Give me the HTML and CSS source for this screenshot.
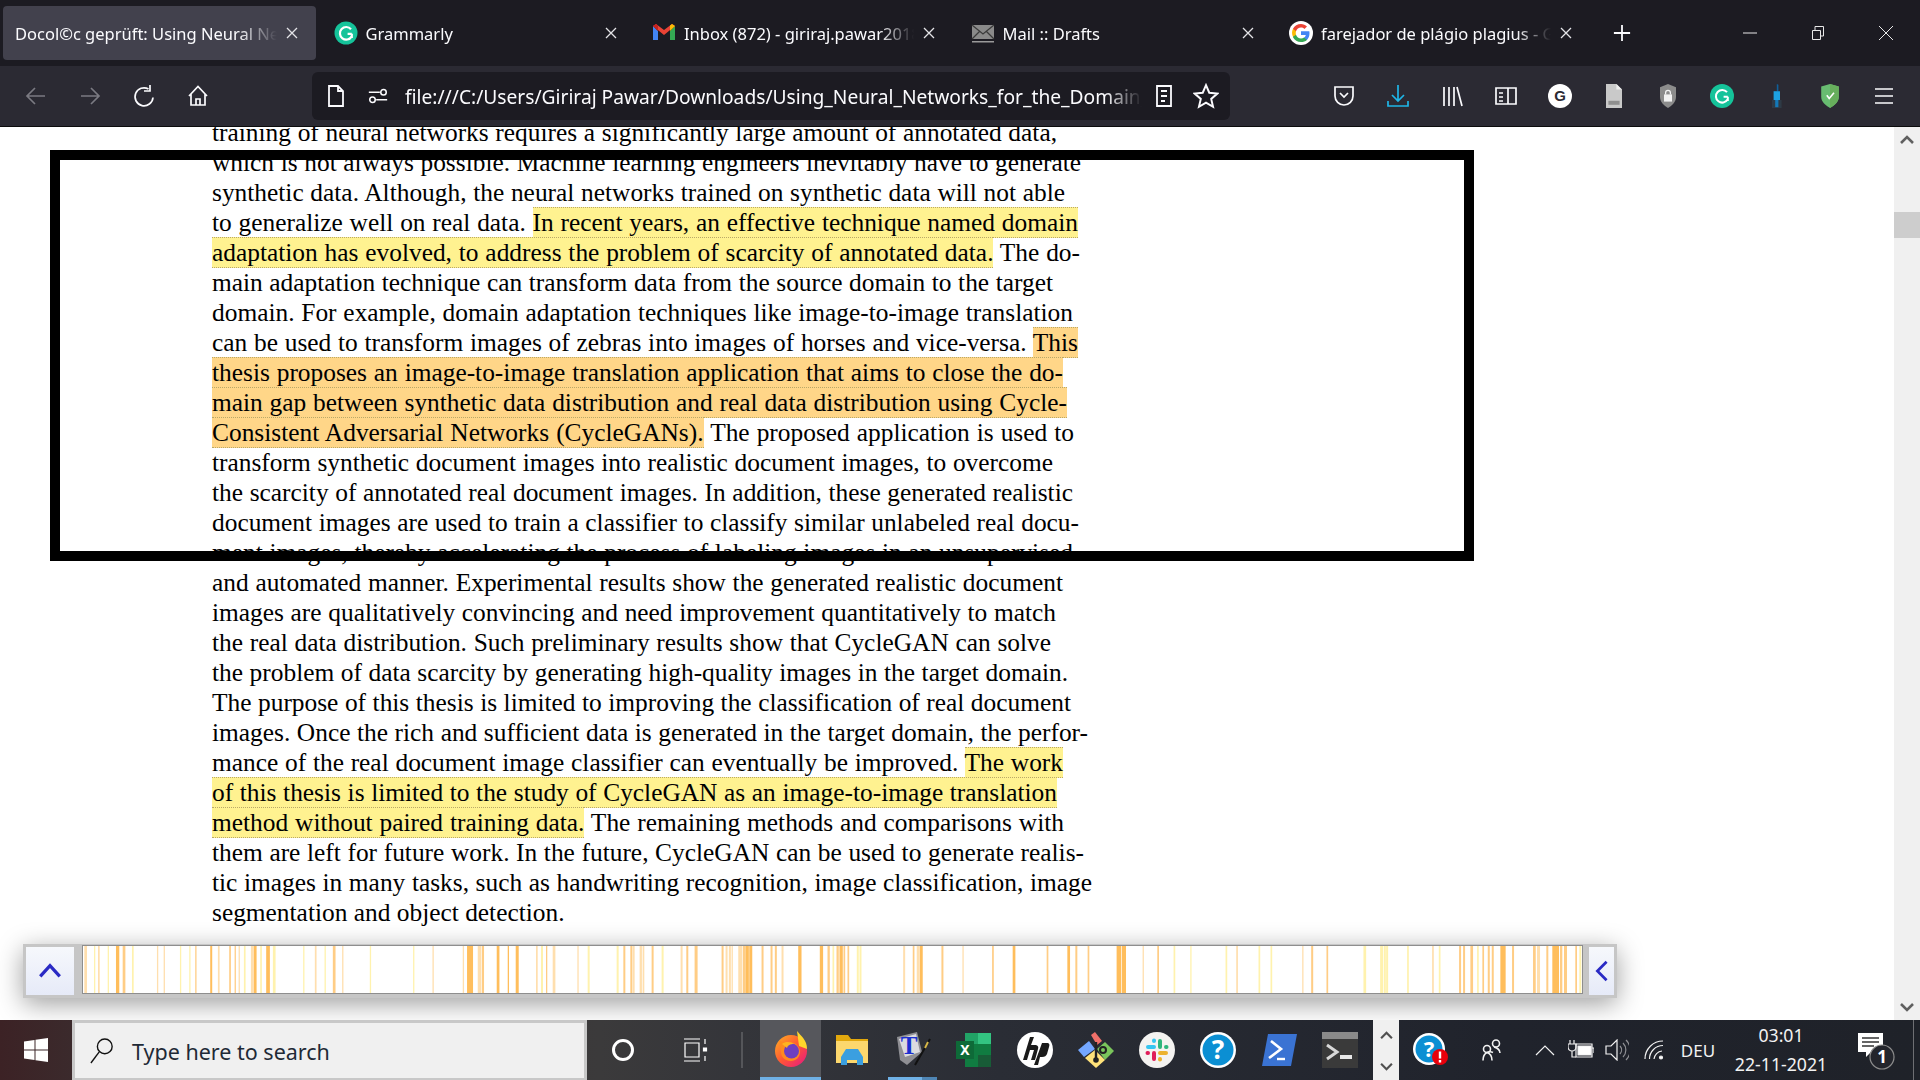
FILE: index.html
```html
<!DOCTYPE html>
<html>
<head>
    <title>Docol©c geprüft: Using Neural Networks</title>
    <link rel="stylesheet" href="styles.css">
</head>
<body>
    <!-- Browser tabs -->
    <div class="tabbar">
        <div class="tab active">
            <span class="tab-title first">Docol©c geprüft: Using Neural Networks</span>
            <svg class="close" viewBox="0 0 14 14"><path d="M2 2l10 10M12 2L2 12"/></svg>
        </div>
        <div class="tab">
            <svg class="favicon" viewBox="0 0 24 24"><circle cx="12" cy="12" r="11.5" fill="#15c39a"/><path d="M17 8.2A6.3 6.3 0 1 0 17.6 15.6M17.8 12.8V17M13.6 12.8h4.2" fill="none" stroke="#fff" stroke-width="2.2"/></svg>
            <span class="tab-title">Grammarly</span>
            <svg class="close" viewBox="0 0 14 14"><path d="M2 2l10 10M12 2L2 12"/></svg>
        </div>
        <div class="tab">
            <svg class="favicon" viewBox="0 0 24 24"><path d="M1 5v14h5V10z" fill="#4285f4"/><path d="M18 10v9h5V5z" fill="#34a853"/><path d="M1 5l11 9 11-9-3-2-8 6-8-6z" fill="#ea4335"/><path d="M18 10l5-5-3-2-2 1.500z" fill="#fbbc04"/><path d="M1 5l3-2 2 1.500V10z" fill="#c5221f"/></svg>
            <span class="tab-title">Inbox (872) - giriraj.pawar2018@gmail.com</span>
            <svg class="close" viewBox="0 0 14 14"><path d="M2 2l10 10M12 2L2 12"/></svg>
        </div>
        <div class="tab">
            <svg class="favicon" viewBox="0 0 24 24"><path d="M1 4h22v14H1z" fill="#8a8a8a"/><path d="M1 4l11 9 11-9M1 18l8-8M23 18l-8-8" fill="none" stroke="#3a3a3a" stroke-width="1.200"/><path d="M1 20h22v1.500H1z" fill="#9a9a9a"/></svg>
            <span class="tab-title">Mail :: Drafts</span>
            <svg class="close" viewBox="0 0 14 14"><path d="M2 2l10 10M12 2L2 12"/></svg>
        </div>
        <div class="tab">
            <svg class="favicon" viewBox="0 0 24 24"><circle cx="12" cy="12" r="12" fill="#fff"/><path d="M20.500 12.200c0-.7-.1-1.300-.2-1.900H12v3.600h4.800c-.2 1.100-.8 2.100-1.800 2.700v2.300h2.900c1.700-1.600 2.600-3.900 2.600-6.700z" fill="#4285f4"/><path d="M12 21c2.400 0 4.400-.8 5.900-2.100L15 16.600c-.8.500-1.800.9-3 .9-2.300 0-4.300-1.600-5-3.700H4v2.400C5.500 19.100 8.500 21 12 21z" fill="#34a853"/><path d="M7 13.800c-.4-1.100-.4-2.400 0-3.600V7.800H4c-1.300 2.500-1.300 5.500 0 8z" fill="#fbbc04"/><path d="M12 6.600c1.300 0 2.500.5 3.400 1.300L18 5.400C16.400 3.900 14.300 3 12 3 8.500 3 5.500 4.900 4 7.800l3 2.400c.7-2.100 2.700-3.600 5-3.600z" fill="#ea4335"/></svg>
            <span class="tab-title">farejador de plágio plagius - Google Search</span>
            <svg class="close" viewBox="0 0 14 14"><path d="M2 2l10 10M12 2L2 12"/></svg>
        </div>
        <svg class="newtab" viewBox="0 0 20 20"><path d="M10 1v18M1 10h18"/></svg>
        <div class="winctl">
            <div class="winbtn"><svg viewBox="0 0 16 16"><path d="M1 8h14"/></svg></div>
            <div class="winbtn"><svg viewBox="0 0 16 16"><path d="M2.500 5.500h8v9h-8zM5 5.500v-4h8.500v9.500h-3"/></svg></div>
            <div class="winbtn"><svg viewBox="0 0 16 16"><path d="M1 1l14 14M15 1L1 15"/></svg></div>
        </div>
    </div>

    <!-- Navigation toolbar -->
    <div class="toolbar">
        <div class="tool dim"><svg viewBox="0 0 24 24"><path d="M21 12H3M11 4l-8 8 8 8"/></svg></div>
        <div class="tool dim"><svg viewBox="0 0 24 24"><path d="M3 12h18M13 4l8 8-8 8"/></svg></div>
        <div class="tool"><svg viewBox="0 0 24 24"><path d="M21 13.500A9 9 0 1 1 16.500 5M18 1v6h-6"/></svg></div>
        <div class="tool"><svg viewBox="0 0 24 24"><path d="M3 12L12 2.500 21 12M5 10v11h14V10M10 21v-6h4v6"/></svg></div>
        <div class="urlbar">
            <svg class="url-icon page-icon" viewBox="0 0 20 24"><path d="M3 2h9l5 5v15H3zM12 2v5h5"/></svg>
            <svg class="url-icon perm-icon" viewBox="0 0 24 24"><circle cx="6" cy="16" r="3"/><circle cx="18" cy="8" r="3"/><path d="M2 8h12M10 16h12"/></svg>
            <span class="url">file:///C:/Users/Giriraj Pawar/Downloads/Using_Neural_Networks_for_the_Domain_Adaptation.pdf</span>
            <svg class="url-icon reader" viewBox="0 0 20 24"><path d="M3 2h14v20H3zM7 7h6M7 12h6M7 17h4"/></svg>
            <svg class="url-icon star" viewBox="0 0 24 24"><path d="M12 2l3 7 7.500.7-5.700 5 1.700 7.300-6.500-3.900L5.500 22l1.700-7.300-5.700-5L9 9z"/></svg>
        </div>
        <div class="tool"><svg viewBox="0 0 24 24"><path d="M3 3h18v9a9 9 0 0 1-18 0zM8 9l4 4 4-4"/></svg></div>
        <div class="tool blue"><svg viewBox="0 0 24 24"><path d="M12 1v16M6 11l6 6 6-6M2 17v5h20v-5"/></svg></div>
        <div class="tool"><svg viewBox="0 0 24 24"><path d="M4 3v19M9 3v19M14 3v19M17 3l5 19"/></svg></div>
        <div class="tool"><svg viewBox="0 0 24 24"><path d="M2 4h20v16H2zM14 4v16M5 9h4M5 13h4M5 17h4"/></svg></div>
        <div class="tool"><svg class="ext" viewBox="0 0 24 24"><circle cx="12" cy="12" r="12" fill="#fff"/><text x="12" y="17" class="ext-g">G</text></svg></div>
        <div class="tool"><svg class="ext" viewBox="0 0 24 30"><path d="M2 0h13l7 7v23H2z" fill="#c9c9c9"/><path d="M15 0l7 7h-7z" fill="#eee"/><path d="M5 21h14v5H5z" fill="#8f8f8f"/></svg></div>
        <div class="tool"><svg class="ext" viewBox="0 0 24 30"><path d="M12 0l10 4v12c0 7-5 11-10 14C7 27 2 23 2 16V4z" fill="#8c8c8c"/><path d="M7 13h10v9H7z" fill="#f2f2f2"/><path d="M9 13v-2a3 3 0 0 1 6 0v2" fill="none" stroke="#f2f2f2" stroke-width="1.600"/></svg></div>
        <div class="tool"><svg class="ext" viewBox="0 0 24 24"><circle cx="12" cy="12" r="12" fill="#15c39a"/><path d="M17 8.200A6.300 6.300 0 1 0 17.600 15.600M17.800 12.800V17M13.600 12.800h4.200" fill="none" stroke="#fff" stroke-width="2"/></svg></div>
        <div class="tool"><svg class="ext" viewBox="0 0 24 30"><path d="M13 0l2 1v8h-2z" fill="#0f5f9a"/><path d="M9 9h8v11H9z" fill="#1da1e2"/><path d="M7 20h12v10H7z" fill="#2e3a46"/><path d="M11 20h4v9h-4z" fill="#1478b8"/></svg></div>
        <div class="tool"><svg class="ext" viewBox="0 0 24 30"><path d="M12 0l11 3v13c0 7-6 11-11 14C7 27 1 23 1 16V3z" fill="#68bc71"/><path d="M12 0l11 3v13c0 7-6 11-11 14z" fill="#67ae5c"/><path d="M8 14l3 4 6-7" fill="none" stroke="#fff" stroke-width="2"/></svg></div>
        <div class="tool"><svg viewBox="0 0 24 24"><path d="M3 5h18M3 12h18M3 19h18"/></svg></div>
    </div>

    <!-- Page with the PDF text -->
    <div class="viewport">
        <div class="doc">
            <div class="lines">
                <div class="ln" style="width:845px">training of neural networks requires a significantly large amount of annotated data,</div>
                <div class="ln" style="width:869px">which is not always possible. Machine learning engineers inevitably have to generate</div>
                <div class="ln" style="width:853px">synthetic data. Although, the neural networks trained on synthetic data will not able</div>
                <div class="ln" style="width:866px">to generalize well on real data. <span class="hl yellow">In recent years, an effective technique named domain</span></div>
                <div class="ln" style="width:868px"><span class="hl yellow">adaptation has evolved, to address the problem of scarcity of annotated data.</span> The do-</div>
                <div class="ln" style="width:841px">main adaptation technique can transform data from the source domain to the target</div>
                <div class="ln" style="width:861px">domain. For example, domain adaptation techniques like image-to-image translation</div>
                <div class="ln" style="width:866px">can be used to transform images of zebras into images of horses and vice-versa. <span class="hl orange">This</span></div>
                <div class="ln" style="width:851px"><span class="hl orange">thesis proposes an image-to-image translation application that aims to close the do-</span></div>
                <div class="ln" style="width:855px"><span class="hl orange">main gap between synthetic data distribution and real data distribution using Cycle-</span></div>
                <div class="ln" style="width:862px"><span class="hl orange">Consistent Adversarial Networks (CycleGANs).</span> The proposed application is used to</div>
                <div class="ln" style="width:841px">transform synthetic document images into realistic document images, to overcome</div>
                <div class="ln" style="width:861px">the scarcity of annotated real document images. In addition, these generated realistic</div>
                <div class="ln" style="width:867px">document images are used to train a classifier to classify similar unlabeled real docu-</div>
                <div class="ln" style="width:861px">ment images, thereby accelerating the process of labeling images in an unsupervised</div>
                <div class="ln" style="width:851px">and automated manner. Experimental results show the generated realistic document</div>
                <div class="ln" style="width:844px">images are qualitatively convincing and need improvement quantitatively to match</div>
                <div class="ln" style="width:839px">the real data distribution. Such preliminary results show that CycleGAN can solve</div>
                <div class="ln" style="width:856px">the problem of data scarcity by generating high-quality images in the target domain.</div>
                <div class="ln" style="width:859px">The purpose of this thesis is limited to improving the classification of real document</div>
                <div class="ln" style="width:876px">images. Once the rich and sufficient data is generated in the target domain, the perfor-</div>
                <div class="ln" style="width:851px">mance of the real document image classifier can eventually be improved. <span class="hl yellow">The work</span></div>
                <div class="ln" style="width:845px"><span class="hl yellow">of this thesis is limited to the study of CycleGAN as an image-to-image translation</span></div>
                <div class="ln" style="width:852px"><span class="hl yellow">method without paired training data.</span> The remaining methods and comparisons with</div>
                <div class="ln" style="width:872px">them are left for future work. In the future, CycleGAN can be used to generate realis-</div>
                <div class="ln" style="width:880px">tic images in many tasks, such as handwriting recognition, image classification, image</div>
                <div class="ln last">segmentation and object detection.</div>
            </div>

            <!-- Black rectangle drawn over the page -->
            <div class="frame"></div>

            <!-- Annotation overview strip -->
            <div class="strip">
                <div class="strip-btn up"><svg viewBox="0 0 24 24"><path d="M3 17l9-10 9 10"/></svg></div>
                <div class="strip-bar">
                    <svg viewBox="82 0 1500 48" preserveAspectRatio="none">
                        <g class="mark-y">
                            <rect x="93" width="1.3"/><rect x="106.700" width="1.300"/><rect x="131" width="1.700"/><rect x="179" width="1.300"/><rect x="188.300" width="1.300"/><rect x="243" width="1.700"/><rect x="259.300" width="1.700"/><rect x="272" width="2.700"/><rect x="302.300" width="1.300"/><rect x="323.700" width="1.300"/><rect x="369" width="1.300"/><rect x="412.300" width="1.300"/><rect x="540.300" width="2"/><rect x="587" width="2"/><rect x="616" width="2"/><rect x="661" width="2"/><rect x="832" width="1.700"/><rect x="856.300" width="2"/><rect x="859" width="2"/><rect x="1173.300" width="1.700"/><rect x="1190" width="1.300"/><rect x="1225.300" width="1.700"/><rect x="1258.300" width="1.700"/><rect x="1270.300" width="1.700"/><rect x="1363.300" width="2.700"/><rect x="1380" width="3"/><rect x="1383.700" width="2"/><rect x="1386" width="2"/><rect x="1407" width="1.700"/><rect x="1438.700" width="1.700"/><rect x="1477" width="1.700"/><rect x="1579.300" width="2"/>
                        </g>
                        <g class="mark-p">
                            <rect x="83.300" width="2.700"/><rect x="97" width="1.700"/><rect x="156" width="1.300"/><rect x="162.700" width="1.300"/><rect x="217" width="1.700"/><rect x="237.700" width="1.300"/><rect x="250" width="2.300"/><rect x="314" width="1.700"/><rect x="341.300" width="1.300"/><rect x="431.700" width="1.300"/><rect x="462" width="1.300"/><rect x="477" width="3.300"/><rect x="535.300" width="1.700"/><rect x="552" width="2.700"/><rect x="576.700" width="1.300"/><rect x="631.700" width="2.300"/><rect x="639" width="2.300"/><rect x="642" width="1.700"/><rect x="680" width="2"/><rect x="725" width="2"/><rect x="728.300" width="2"/><rect x="731" width="1.300"/><rect x="737.700" width="4"/><rect x="781" width="2"/><rect x="902.700" width="2"/><rect x="916.300" width="2.700"/><rect x="962" width="1.300"/><rect x="1142.300" width="1.300"/><rect x="1236" width="1.700"/><rect x="1302" width="1.300"/><rect x="1432" width="1.700"/><rect x="1537" width="3"/>
                        </g>
                        <g class="mark-l">
                            <rect x="121.700" width="2.700"/><rect x="194.300" width="1.300"/><rect x="228.300" width="1.700"/><rect x="233.700" width="1.300"/><rect x="332" width="2.700"/><rect x="481" width="2.300"/><rect x="545.300" width="1.300"/><rect x="622.700" width="2"/><rect x="629.700" width="1.700"/><rect x="651" width="2"/><rect x="685.700" width="2"/><rect x="694" width="3"/><rect x="721" width="2"/><rect x="742.300" width="2.700"/><rect x="761" width="2"/><rect x="770" width="2"/><rect x="774.300" width="2"/><rect x="827" width="2.300"/><rect x="836" width="2.300"/><rect x="843" width="1.700"/><rect x="847" width="1.700"/><rect x="912.300" width="1.700"/><rect x="941" width="2"/><rect x="991.700" width="1.700"/><rect x="1046.300" width="1.700"/><rect x="1075" width="2"/><rect x="1087.300" width="1.700"/><rect x="1157" width="1.700"/><rect x="1311" width="2"/><rect x="1326.300" width="1.700"/><rect x="1459" width="2"/><rect x="1463" width="2"/><rect x="1470.300" width="2.700"/><rect x="1482.300" width="1.700"/><rect x="1487.700" width="2"/><rect x="1491.700" width="2"/><rect x="1512" width="2"/><rect x="1533" width="2.700"/><rect x="1546.300" width="2"/><rect x="1560" width="2.300"/><rect x="1564" width="3"/><rect x="1575.300" width="1.700"/>
                        </g>
                        <g class="mark-o">
                            <rect x="115" width="3.300"/><rect x="209.300" width="2"/><rect x="252.700" width="3"/><rect x="265.300" width="3.700"/><rect x="466.300" width="6"/><rect x="496" width="2.700"/><rect x="507" width="1.300"/><rect x="515" width="3"/><rect x="745" width="3.300"/><rect x="748.700" width="3"/><rect x="797.700" width="3.300"/><rect x="819.300" width="3.300"/><rect x="839" width="3.300"/><rect x="919.300" width="3"/><rect x="1012.300" width="2.700"/><rect x="1067" width="2.700"/><rect x="1116.300" width="4.700"/><rect x="1121.700" width="4"/><rect x="1500.300" width="5.300"/><rect x="1552.300" width="6.700"/>
                        </g>
                    </svg>
                </div>
                <div class="strip-btn side"><svg viewBox="0 0 24 24"><path d="M17 2L7 12l10 10"/></svg></div>
            </div>
        </div>
        <div class="scrollbar">
            <div class="sb-arrow"><svg viewBox="0 0 14 10"><path d="M1 8l6-6 6 6"/></svg></div>
            <div class="sb-thumb"></div>
            <div class="sb-arrow bottom"><svg viewBox="0 0 14 10"><path d="M1 2l6 6 6-6"/></svg></div>
        </div>
    </div>

    <!-- Windows taskbar -->
    <div class="taskbar">
        <div class="start">
            <svg viewBox="0 0 24 24"><path d="M0 3.500L10.500 2v9.500H0zM11.500 1.800L24 0v11.500H11.500zM0 12.500h10.500V22L0 20.500zM11.500 12.500H24V24l-12.500-1.800z" fill="#fff"/></svg>
        </div>
        <div class="search">
            <svg viewBox="0 0 26 30"><circle cx="16" cy="10" r="8"/><path d="M10 16L1 28"/></svg>
            <span>Type here to search</span>
        </div>
        <div class="slot"><svg class="cortana" viewBox="0 0 24 24"><circle cx="12" cy="12" r="9.500"/></svg></div>
        <div class="slot"><svg class="taskview" viewBox="0 0 26 24"><path d="M1 1h16M1 23h16M2 5h14v14H2zM22 1v5M22 18v5"/><path d="M20.500 10h3v3h-3z" fill="#fff"/></svg></div>
        <div class="sep"></div>
        <div class="pin running">
            <svg viewBox="0 0 36 36"><defs><linearGradient id="ff" x1="0" y1="0" x2="1" y2="1"><stop offset="0" stop-color="#ffb320"/><stop offset=".5" stop-color="#ff5634"/><stop offset="1" stop-color="#e31587"/></linearGradient></defs><circle cx="18" cy="20" r="16" fill="url(#ff)"/><path d="M24 0c4 5 10 9 10 18l-8-3z" fill="#ffd52b"/><path d="M6 9c2 3 6 2 10 2 6 0 11 4 11 10 0 5-4 9-9 9-6 0-10-4-10-9z" fill="#ff8a1e"/><circle cx="18.500" cy="20" r="7.500" fill="#6e3fc0"/><path d="M9 13c4-3 9-2 12 0-4 0-6 1-7 4z" fill="#ffb320"/></svg>
        </div>
        <div class="pin"><svg viewBox="0 0 36 36"><path d="M2 3h12l3 4h17v24H2z" fill="#e2a80d"/><path d="M2 9h32v22H2z" fill="#fcd76d"/><path d="M7 25l5-8h12l5 8v8h-6v-5H13v5H7z" fill="#3b9fe0"/></svg></div>
        <div class="pin typora"><svg viewBox="0 0 36 36"><path d="M2 6L22 1l5 20-15 13-7-5z" fill="#8f8f94"/><path d="M4 8l17-5 4 18-15 5z" fill="#dcdce0"/><text x="14" y="23" class="pin-t">T</text><path d="M35 8L20 34" stroke="#111" stroke-width="2"/><path d="M33 11l-3 6" stroke="#d6b84a" stroke-width="2"/></svg></div>
        <div class="pin"><svg viewBox="0 0 36 36"><path d="M9 1h26v34H9z" fill="#107c41"/><path d="M22 1h13v11H22z" fill="#33c481"/><path d="M9 1h13v11H9z" fill="#21a366"/><path d="M22 12h13v11H22z" fill="#107c41"/><path d="M22 23h13v12H22z" fill="#185c37"/><path d="M0 9h18v18H0z" fill="#0e6a38"/><text x="9" y="23" class="pin-x">X</text></svg></div>
        <div class="pin"><svg viewBox="0 0 36 36"><circle cx="18" cy="18" r="18" fill="#fff"/><path d="M13 5l-7 23h4l3-10h4l-3 10h4l3-11c1-3-1-4-3-4h-4l3-8zM25 11h5c2 0 3 1 2 4l-2 7c-1 2-2 3-5 3h-2l-2 8h-4z" fill="#1a1a1a"/></svg></div>
        <div class="pin"><svg viewBox="0 0 36 36"><path d="M13 3l4-3 7 9-5 4z" fill="#f0706a"/><path d="M0 18l11-9 6 8-11 8z" fill="#74a7ff"/><path d="M19 17l8-7 9 9-9 9z" fill="#7ac55c"/><path d="M7 26l10-8 10 10-9 8z" fill="#ffe27a"/><path d="M18 10v16" stroke="#222" stroke-width="2.400"/><circle cx="18" cy="28" r="2.800" fill="#222"/><circle cx="25" cy="18" r="3" fill="none" stroke="#222" stroke-width="2"/></svg></div>
        <div class="pin"><svg class="slack" viewBox="0 0 36 36"><circle cx="18" cy="18" r="18" fill="#f4f3f1"/><path d="M9 15h6M15 8.500v.5" stroke="#36c5f0"/><path d="M21 9v6M27 15h.5" stroke="#2eb67d"/><path d="M21 21h6M21 27v.5" stroke="#ecb22e"/><path d="M15 21v6M9 21h-.5" stroke="#e01e5a"/></svg></div>
        <div class="pin"><svg viewBox="0 0 36 36"><circle cx="18" cy="18" r="18" fill="#fff"/><circle cx="18" cy="18" r="15.500" fill="#0b8fd3"/><text x="18" y="27" class="pin-q">?</text></svg></div>
        <div class="pin"><svg viewBox="0 0 36 36"><path d="M7 2h29l-6 32H1z" fill="#3a73d3"/><path d="M10 9l10 8-12 9" fill="none" stroke="#fff" stroke-width="2.600"/><path d="M16 27h8" stroke="#fff" stroke-width="2.400"/></svg></div>
        <div class="pin"><svg viewBox="0 0 36 36"><path d="M0 0h36v36H0z" fill="#3a3a3a"/><path d="M0 0h36v7H0z" fill="#8a8a8a"/><path d="M5 13l10 7-10 7" fill="none" stroke="#d8d8d8" stroke-width="3"/><path d="M18 27h12v-4H18z" fill="#e8e8e8"/></svg></div>
        <div class="pin-scroll">
            <svg viewBox="0 0 14 10"><path d="M1 8l6-6 6 6"/></svg>
            <svg viewBox="0 0 14 10"><path d="M1 2l6 6 6-6"/></svg>
        </div>
        <div class="tray">
            <div class="tr tr-help"><svg viewBox="0 0 36 36"><circle cx="16" cy="17" r="16" fill="#fff"/><circle cx="16" cy="17" r="13.500" fill="#0b8fd3"/><text x="16" y="25" class="pin-q small">?</text><circle cx="27" cy="25" r="8" fill="#e8000b"/><path d="M25.800 19.500h2.400v7h-2.400zM25.800 28h2.400v2.400h-2.400z" fill="#fff"/></svg></div>
            <div class="tr tr-people"><svg viewBox="0 0 24 24"><circle cx="17" cy="5.500" r="3.500"/><circle cx="8" cy="11" r="3.500"/><path d="M14 14.500c-2-1-4-1-6 0-3 1.500-4 4-4 8M8 14.500c3 1 5 3 5 8M15 9c3 1 6 2 6 6"/></svg></div>
            <div class="tr tr-chev"><svg viewBox="0 0 20 12"><path d="M1 11l9-9 9 9"/></svg></div>
            <div class="tr tr-batt"><svg viewBox="0 0 26 22"><path d="M8 5h16v13H8zM24 9h2v5"/><path d="M10 7h13v9H10z" fill="#fff"/><path d="M2 1v4M6 1v4M0 5h8v3a4 4 0 0 1-8 0zM4 12v6h4"/></svg></div>
            <div class="tr tr-vol"><svg viewBox="0 0 24 22"><path d="M1 7h5l6-6v20l-6-6H1z"/><path class="faint" d="M15 7a6 6 0 0 1 0 8M18 4a10 10 0 0 1 0 14M21 1a14 14 0 0 1 0 20"/></svg></div>
            <div class="tr tr-wifi"><svg viewBox="0 0 20 20"><path d="M1 19A18 18 0 0 1 19 1M5.500 19A13.500 13.500 0 0 1 19 5.500M10 19a9 9 0 0 1 8-8"/><circle cx="17" cy="17.500" r="1.500" fill="#fff"/></svg></div>
            <div class="tr tr-lang">DEU</div>
            <div class="tr tr-clock"><span>03:01</span><span>22-11-2021</span></div>
            <div class="tr tr-note"><svg viewBox="0 0 40 40"><path d="M3 3h25v19H16l-5 5v-5H3z" fill="#fff"/><path d="M7 8h17M7 12h17M7 16h12" stroke="#333" stroke-width="1.300"/><circle cx="27" cy="27" r="12" fill="#23252c" stroke="#8d8d8d"/><text x="27" y="33" class="note-n">1</text></svg></div>
            <div class="edge"></div>
        </div>
    </div>
</body>
</html>
```

FILE: styles.css
```css
html, body {
    margin: 0;
    height: 100%;
    overflow: hidden;
}

body {
    width: 1920px;
    height: 1080px;
    display: flex;
    flex-direction: column;
    font-family: "Noto Sans", "Open Sans", sans-serif;
}

svg {
    display: block;
}

/* Tabs */
.tabbar {
    flex: 0 0 66px;
    box-sizing: border-box;
    display: flex;
    align-items: center;
    gap: 5.5px;
    padding: 0 0 0 3px;
    background-color: #1c1b22;
    color: #fbfbfe;
}

.tab {
    flex: 0 0 313px;
    min-width: 0;
    height: 54px;
    box-sizing: border-box;
    display: flex;
    align-items: center;
    gap: 8px;
    padding: 0 17px 0 12px;
    border-radius: 4px;
}

.tab.active {
    background-color: #42414d;
}

.favicon {
    width: 24px;
    height: 24px;
    flex: none;
}

.tab-title {
    flex: 1;
    min-width: 0;
    font-size: 16.5px;
    white-space: nowrap;
    overflow: hidden;
    -webkit-mask-image: linear-gradient(90deg, #000 85%, transparent 100%);
    mask-image: linear-gradient(90deg, #000 85%, transparent 100%);
}

.close {
    width: 14px;
    height: 14px;
    flex: none;
    fill: none;
    stroke: #e4e4e8;
    stroke-width: 1.3;
}

.newtab {
    width: 18px;
    height: 18px;
    margin-left: 17px;
    flex: none;
    fill: none;
    stroke: #fbfbfe;
    stroke-width: 2;
}

.winctl {
    margin-left: auto;
    display: flex;
}

.winbtn {
    width: 68px;
    display: flex;
    justify-content: center;
}

.winbtn svg {
    width: 16px;
    height: 16px;
    fill: none;
    stroke: #e8e8e8;
    stroke-width: 1;
}

/* Toolbar */
.toolbar {
    flex: 0 0 61px;
    box-sizing: border-box;
    display: flex;
    align-items: center;
    padding: 0 9px 0;
    background-color: #2b2a33;
    border-bottom: 1px solid #0c0c0d;
}

.tool {
    flex: 0 0 54px;
    display: flex;
    justify-content: center;
}

.tool svg {
    width: 24px;
    height: 24px;
    fill: none;
    stroke: #fbfbfe;
    stroke-width: 1.7;
}

.tool.dim svg {
    stroke: #7b7a82;
}

.tool.blue svg {
    stroke: #1fb6e8;
}

.tool svg.ext {
    stroke: none;
}

.ext-g {
    font: bold 15px "Liberation Sans", sans-serif;
    fill: #2b2a33;
    text-anchor: middle;
}

.urlbar {
    flex: 0 0 918px;
    min-width: 0;
    height: 48px;
    margin: 0 87px;
    display: flex;
    align-items: center;
    border-radius: 6px;
    background-color: #1c1b22;
    color: #fbfbfe;
}

.url-icon {
    flex: none;
    fill: none;
    stroke: #fbfbfe;
    stroke-width: 1.8;
}

.page-icon {
    width: 20px;
    height: 24px;
    margin-left: 14px;
}

.perm-icon {
    width: 22px;
    height: 22px;
    margin-left: 21px;
    stroke-width: 1.7;
}

.url {
    flex: 0 0 737px;
    margin-left: 16px;
    font-size: 19.2px;
    white-space: nowrap;
    overflow: hidden;
    -webkit-mask-image: linear-gradient(90deg, #000 95%, transparent 100%);
    mask-image: linear-gradient(90deg, #000 95%, transparent 100%);
}

.reader {
    width: 20px;
    height: 24px;
    margin-left: 12px;
}

.star {
    width: 26px;
    height: 26px;
    margin-left: 19px;
}

/* Page */
.viewport {
    flex: 0 0 893px;
    display: flex;
    background-color: #fff;
}

.doc {
    flex: 1;
    position: relative;
    overflow: hidden;
}

.lines {
    margin-top: -10px;
    padding-left: 212px;
    font-family: "Liberation Serif", "Times New Roman", serif;
    font-size: 25.4px;
    line-height: 30px;
    color: #000;
}

/* each PDF line keeps its own measured width */
.ln {
    height: 30px;
    word-spacing: -2px;
    text-align: justify;
    text-align-last: justify;
}

.ln.last {
    word-spacing: 0;
    text-align-last: left;
}

.hl {
    padding: 0 0 1px;
    border-top: 1px dotted #b9a868;
    border-bottom: 1px dotted #b9a868;
}

.yellow {
    background-color: #fff290;
}

.orange {
    background-color: #ffd688;
}

.frame {
    position: absolute;
    left: 50px;
    top: 23px;
    width: 1424px;
    height: 411px;
    box-sizing: border-box;
    border: 10px solid #000;
}

.strip {
    position: absolute;
    left: 23px;
    top: 817px;
    width: 1594px;
    height: 54px;
    box-sizing: border-box;
    display: flex;
    align-items: flex-start;
    padding: 1px 3px 0 3px;
    background-color: #c6c6c6;
    box-shadow: 0 6px 26px rgba(0, 0, 0, 0.38);
}

.strip-btn {
    margin-top: 2px;
    height: 48px;
    display: flex;
    align-items: center;
    justify-content: center;
    background: linear-gradient(#f6f8fc, #e6eaf8);
}

.strip-btn.up {
    width: 48px;
}

.strip-btn.side {
    width: 25px;
    margin-left: 6px;
}

.strip-btn svg {
    fill: none;
    stroke: #2a2ac4;
    stroke-width: 3;
}

.strip-btn.up svg {
    width: 26px;
    height: 26px;
}

.strip-btn.side svg {
    width: 22px;
    height: 24px;
}

.strip-bar {
    width: 1501px;
    height: 49px;
    box-sizing: border-box;
    margin-left: 8px;
    border: 1px solid #8e8e8e;
    background-color: #fff;
}

.strip-bar svg {
    width: 100%;
    height: 100%;
}

.strip-bar rect {
    height: 48px;
}

.mark-y {
    fill: #fff2ae;
}

.mark-p {
    fill: #ffdfae;
}

.mark-l {
    fill: #ffcd85;
}

.mark-o {
    fill: #ffbe5c;
}

.scrollbar {
    flex: 0 0 26px;
    display: flex;
    flex-direction: column;
    background-color: #f0f0f0;
}

.sb-arrow {
    height: 26px;
    display: flex;
    align-items: center;
    justify-content: center;
}

.sb-arrow.bottom {
    margin-top: auto;
}

.sb-arrow svg {
    width: 14px;
    height: 10px;
    fill: none;
    stroke: #606060;
    stroke-width: 2.6;
}

.sb-thumb {
    height: 26px;
    margin-top: 59px;
    background-color: #cdcdcd;
}

/* Taskbar */
.taskbar {
    flex: 0 0 60px;
    display: flex;
    align-items: stretch;
    background: linear-gradient(90deg, #3c2225 0, #3b2a2c 72px, #3b3a3b 600px, #34353a 740px, #2a2d35 1000px, #20232c 1500px, #1f2229 100%);
}

.start {
    flex: 0 0 72px;
    display: flex;
    align-items: center;
    justify-content: center;
}

.start svg {
    width: 24px;
    height: 24px;
}

.search {
    flex: 0 0 515px;
    box-sizing: border-box;
    display: flex;
    align-items: center;
    gap: 18px;
    padding-left: 15px;
    border: 3px solid #c8c8c8;
    border-bottom-width: 2px;
    background-color: #f0f0f0;
    color: #1f2a36;
    font-size: 21.5px;
}

.search span {
    padding-top: 2px;
}

.search svg {
    width: 24px;
    height: 28px;
    fill: none;
    stroke: #111;
    stroke-width: 1.5;
}

.slot {
    flex: 0 0 72.5px;
    display: flex;
    align-items: center;
    justify-content: center;
}

.cortana {
    width: 24px;
    height: 24px;
    fill: none;
    stroke: #fff;
    stroke-width: 3;
}

.taskview {
    width: 26px;
    height: 24px;
    fill: none;
    stroke: #fff;
    stroke-width: 1.2;
}

.sep {
    flex: 0 0 2px;
    margin: 12px 17px 12px 9px;
    background-color: #55565a;
}

.pin {
    flex: 0 0 61px;
    box-sizing: border-box;
    display: flex;
    align-items: center;
    justify-content: center;
}

.pin svg {
    width: 36px;
    height: 36px;
}

.slack path {
    fill: none;
    stroke-width: 4;
    stroke-linecap: round;
}

.pin.running {
    background-color: #56575c;
    border-bottom: 3px solid #6fb1e6;
}

.pin.typora {
    border-bottom: 3px solid;
    border-image: linear-gradient(90deg, transparent 0, transparent 7px, #6fb1e6 7px, #6fb1e6 40px, #4f86b5 40px, #4f86b5 54px, transparent 54px) 1;
}

.pin-t {
    font: bold 25px "Liberation Serif", serif;
    fill: #1c2fd0;
    text-anchor: middle;
}

.pin-x {
    font: bold 14px "Noto Sans", sans-serif;
    fill: #fff;
    text-anchor: middle;
}

.pin-q {
    font: bold 26px "Noto Sans", sans-serif;
    fill: #fff;
    text-anchor: middle;
}

.pin-q.small {
    font-size: 22px;
}

.pin-scroll {
    flex: 0 0 26px;
    margin-left: 3px;
    display: flex;
    flex-direction: column;
    align-items: center;
    justify-content: space-between;
    box-sizing: border-box;
    padding: 11px 0 9px;
    background-color: #f0f0f0;
}

.pin-scroll svg {
    width: 13px;
    height: 9px;
    fill: none;
    stroke: #505050;
    stroke-width: 2.4;
}

.tray {
    flex: 1;
    position: relative;
    display: flex;
    color: #f2f2f2;
}

.tr {
    display: flex;
    align-items: center;
    justify-content: center;
}

.tr svg {
    fill: none;
    stroke: #f2f2f2;
    stroke-width: 1.2;
}

.tr-help {
    flex: 0 0 60px;
    padding-left: 3px;
    box-sizing: border-box;
}

.tr-help svg {
    width: 36px;
    height: 36px;
    stroke: none;
}

.tr-people {
    flex: 0 0 64px;
}

.tr-people svg {
    width: 24px;
    height: 24px;
    stroke-width: 1.6;
}

.tr-chev {
    flex: 0 0 44px;
}

.tr-chev svg {
    width: 20px;
    height: 12px;
}

.tr-batt {
    flex: 0 0 28px;
}

.tr-batt svg {
    width: 26px;
    height: 22px;
}

.tr-vol {
    flex: 0 0 44px;
}

.tr-vol svg {
    width: 24px;
    height: 22px;
}

.tr-vol .faint {
    stroke: #8f9094;
}

.tr-wifi {
    flex: 0 0 30px;
}

.tr-wifi svg {
    width: 20px;
    height: 20px;
}

.tr-lang {
    flex: 0 0 58px;
    font-size: 17px;
}

.tr-clock {
    flex: 0 0 108px;
    flex-direction: column;
    gap: 6px;
    font-size: 17.7px;
    line-height: 23px;
}

.tr-note {
    flex: 0 0 68px;
    padding-left: 12px;
    box-sizing: border-box;
}

.tr-note svg {
    width: 40px;
    height: 40px;
    stroke: none;
}

.note-n {
    font: bold 17px "Noto Sans", sans-serif;
    fill: #fff;
    text-anchor: middle;
}

.edge {
    position: absolute;
    right: 6px;
    top: 0;
    bottom: 0;
    width: 1px;
    background-color: #6e6f73;
}
```
